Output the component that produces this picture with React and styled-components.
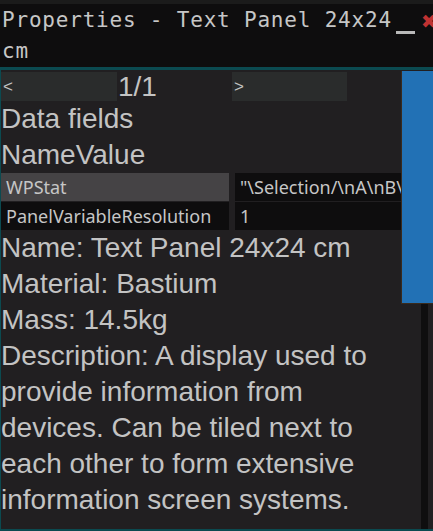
import React from 'react'
import styled, { createGlobalStyle } from 'styled-components'

const Global = createGlobalStyle`
  html, body {
    margin: 0;
    padding: 0;
    background: #1b1b1b;
    overflow: hidden;
  }
`

const Window = styled.div`
  width: 433px;
  height: 531px;
  display: flex;
  flex-direction: column;
  background: #1b1b1b;
  padding-top: 4px;
  box-sizing: border-box;
  overflow: hidden;
`

const TitleBar = styled.div`
  display: flex;
  background: #0e0d0e;
  border-bottom: 3px solid #0b4a50;
  padding-top: 1px;
`

const Title = styled.div`
  width: 396px;
  padding-left: 2px;
  font-family: "DejaVu Sans Mono", monospace;
  font-size: 21px;
  letter-spacing: 0.8px;
  line-height: 31px;
  color: #c6c6c6;
`

const Controls = styled.div`
  display: flex;
  align-items: flex-start;
  gap: 6px;
  padding-top: 9px;
`

const Minimize = styled.div`
  width: 19px;
  height: 3px;
  margin-top: 17px;
  background: #b9b9b9;
`

const Close = styled.div`
  width: 12px;
  height: 14px;
  font-family: "DejaVu Sans", sans-serif;
  font-weight: bold;
  font-size: 19px;
  line-height: 14px;
  color: #c03232;
`

const Body = styled.div`
  flex: 1;
  display: flex;
  background: #211f21;
  border-left: 1px solid #0b4a50;
  border-bottom: 2px solid #0b4a50;
  min-height: 0;
`

const Main = styled.div`
  width: 400px;
  padding-top: 2px;
  color: #c3c3c3;
  font-family: "Liberation Sans", Arial, sans-serif;
  font-size: 28px;
  line-height: 36px;
`

const Pager = styled.div`
  display: grid;
  grid-template-columns: 116px 115px 115px;
  height: 29px;
  line-height: 29px;
`

const PageButton = styled.div`
  background: #2a2c2c;
  font-size: 17px;
  padding-left: 2px;
`

const PageLabel = styled.div`
  padding-left: 1px;
  font-size: 28px;
`

const Line = styled.div`
  white-space: nowrap;
`

const Table = styled.div`
  display: grid;
  grid-template-columns: 228px 166px;
  column-gap: 6px;
  row-gap: 1px;
  font-family: "Noto Sans", "Open Sans", sans-serif;
  font-size: 18px;
  line-height: 28px;
  color: #c6c6c6;
`

const Cell = styled.div`
  height: 28px;
  padding-left: ${p => (p.value ? 5 : 5)}px;
  background: ${p => (p.active ? '#454345' : '#0e0d0e')};
  white-space: nowrap;
  overflow: hidden;
`

const Desc = styled.div`
  width: 392px;
`

const Scroll = styled.div`
  width: 32px;
  display: flex;
  flex-direction: column;
  padding-top: 1px;
`

const Thumb = styled.div`
  height: 232px;
  background: #2271b5;
  border-left: 1px solid #3a2a1c;
  border-bottom: 1px solid #3a2a1c;
`

const Track = styled.div`
  flex: 1;
  background: linear-gradient(90deg, #211f21 0 20px, #0f0e0f 20px 27px, #211f21 27px);
`

const rows = [
  { name: 'WPStat', value: '"\\Selection/\\nA\\nB\\n"', active: true },
  { name: 'PanelVariableResolution', value: '1' },
]

export default function App() {
  return (
    <>
      <Global />
      <Window>
        <TitleBar>
          <Title>Properties - Text Panel 24x24 cm</Title>
          <Controls>
            <Minimize />
            <Close>✖</Close>
          </Controls>
        </TitleBar>
        <Body>
          <Main>
            <Pager>
              <PageButton>&lt;</PageButton>
              <PageLabel>1/1</PageLabel>
              <PageButton>&gt;</PageButton>
            </Pager>
            <Line>Data fields</Line>
            <Line>NameValue</Line>
            <Table>
              {rows.map(r => (
                <React.Fragment key={r.name}>
                  <Cell active={r.active}>{r.name}</Cell>
                  <Cell value>{r.value}</Cell>
                </React.Fragment>
              ))}
            </Table>
            <Line>Name: Text Panel 24x24 cm</Line>
            <Line>Material: Bastium</Line>
            <Line>Mass: 14.5kg</Line>
            <Desc>
              Description: A display used to provide information from devices. Can be tiled next to
              each other to form extensive information screen systems.
            </Desc>
          </Main>
          <Scroll>
            <Thumb />
            <Track />
          </Scroll>
        </Body>
      </Window>
    </>
  )
}
